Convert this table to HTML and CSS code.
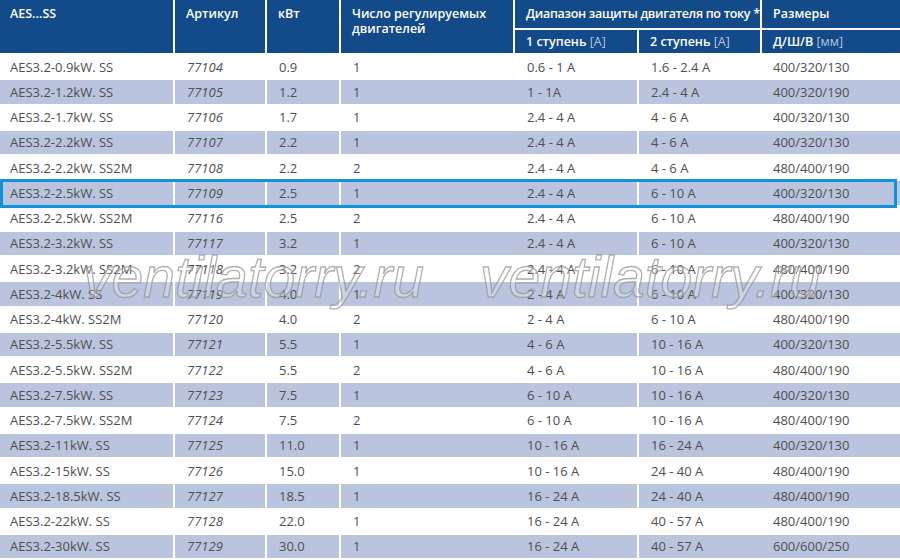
FILE: index.html
```html
<!DOCTYPE html>
<html lang="ru">
<head>
<meta charset="utf-8">
<title>AES...SS</title>
<link rel="stylesheet" href="styles.css">
</head>
<body>
<div class="sheet">
  <div class="head">
    <div class="hc c1 span2">AES...SS</div>
    <div class="hc c2 span2">Артикул</div>
    <div class="hc c3 span2">кВт</div>
    <div class="hc c4 span2">Число регулируемых<br>двигателей</div>
    <div class="hc c56">Диапазон защиты двигателя по току *</div>
    <div class="hc c7 last">Размеры</div>
    <div class="hc sub c5">1 ступень <span class="unit">[A]</span></div>
    <div class="hc sub c6">2 ступень <span class="unit">[A]</span></div>
    <div class="hc sub c7 last">Д/Ш/В <span class="unit">[мм]</span></div>
  </div>
  <div class="body">
    <div class="row"><div class="d sep">AES3.2-0.9kW. SS</div><div class="d sep art">77104</div><div class="d sep">0.9</div><div class="d">1</div><div class="d sep">0.6 - 1 A</div><div class="d">1.6 - 2.4 A</div><div class="d">400/320/130</div></div>
    <div class="row"><div class="d sep">AES3.2-1.2kW. SS</div><div class="d sep art">77105</div><div class="d sep">1.2</div><div class="d">1</div><div class="d sep">1 - 1A</div><div class="d">2.4 - 4 A</div><div class="d">400/320/190</div></div>
    <div class="row"><div class="d sep">AES3.2-1.7kW. SS</div><div class="d sep art">77106</div><div class="d sep">1.7</div><div class="d">1</div><div class="d sep">2.4 - 4 A</div><div class="d">4 - 6 A</div><div class="d">400/320/130</div></div>
    <div class="row"><div class="d sep">AES3.2-2.2kW. SS</div><div class="d sep art">77107</div><div class="d sep">2.2</div><div class="d">1</div><div class="d sep">2.4 - 4 A</div><div class="d">4 - 6 A</div><div class="d">400/320/130</div></div>
    <div class="row"><div class="d sep">AES3.2-2.2kW. SS2M</div><div class="d sep art">77108</div><div class="d sep">2.2</div><div class="d">2</div><div class="d sep">2.4 - 4 A</div><div class="d">4 - 6 A</div><div class="d">480/400/190</div></div>
    <div class="row current"><div class="d sep">AES3.2-2.5kW. SS</div><div class="d sep art">77109</div><div class="d sep">2.5</div><div class="d">1</div><div class="d sep">2.4 - 4 A</div><div class="d">6 - 10 A</div><div class="d">400/320/130</div></div>
    <div class="row"><div class="d sep">AES3.2-2.5kW. SS2M</div><div class="d sep art">77116</div><div class="d sep">2.5</div><div class="d">2</div><div class="d sep">2.4 - 4 A</div><div class="d">6 - 10 A</div><div class="d">480/400/190</div></div>
    <div class="row"><div class="d sep">AES3.2-3.2kW. SS</div><div class="d sep art">77117</div><div class="d sep">3.2</div><div class="d">1</div><div class="d sep">2.4 - 4 A</div><div class="d">6 - 10 A</div><div class="d">400/320/130</div></div>
    <div class="row"><div class="d sep">AES3.2-3.2kW. SS2M</div><div class="d sep art">77118</div><div class="d sep">3.2</div><div class="d">2</div><div class="d sep">2.4 - 4 A</div><div class="d">6 - 10 A</div><div class="d">480/400/190</div></div>
    <div class="row"><div class="d sep">AES3.2-4kW. SS</div><div class="d sep art">77119</div><div class="d sep">4.0</div><div class="d">1</div><div class="d sep">2 - 4 A</div><div class="d">6 - 10 A</div><div class="d">400/320/130</div></div>
    <div class="row"><div class="d sep">AES3.2-4kW. SS2M</div><div class="d sep art">77120</div><div class="d sep">4.0</div><div class="d">2</div><div class="d sep">2 - 4 A</div><div class="d">6 - 10 A</div><div class="d">480/400/190</div></div>
    <div class="row"><div class="d sep">AES3.2-5.5kW. SS</div><div class="d sep art">77121</div><div class="d sep">5.5</div><div class="d">1</div><div class="d sep">4 - 6 A</div><div class="d">10 - 16 A</div><div class="d">400/320/130</div></div>
    <div class="row"><div class="d sep">AES3.2-5.5kW. SS2M</div><div class="d sep art">77122</div><div class="d sep">5.5</div><div class="d">2</div><div class="d sep">4 - 6 A</div><div class="d">10 - 16 A</div><div class="d">480/400/190</div></div>
    <div class="row"><div class="d sep">AES3.2-7.5kW. SS</div><div class="d sep art">77123</div><div class="d sep">7.5</div><div class="d">1</div><div class="d sep">6 - 10 A</div><div class="d">10 - 16 A</div><div class="d">400/320/130</div></div>
    <div class="row"><div class="d sep">AES3.2-7.5kW. SS2M</div><div class="d sep art">77124</div><div class="d sep">7.5</div><div class="d">2</div><div class="d sep">6 - 10 A</div><div class="d">10 - 16 A</div><div class="d">480/400/190</div></div>
    <div class="row"><div class="d sep">AES3.2-11kW. SS</div><div class="d sep art">77125</div><div class="d sep">11.0</div><div class="d">1</div><div class="d sep">10 - 16 A</div><div class="d">16 - 24 A</div><div class="d">400/320/130</div></div>
    <div class="row"><div class="d sep">AES3.2-15kW. SS</div><div class="d sep art">77126</div><div class="d sep">15.0</div><div class="d">1</div><div class="d sep">10 - 16 A</div><div class="d">24 - 40 A</div><div class="d">480/400/190</div></div>
    <div class="row"><div class="d sep">AES3.2-18.5kW. SS</div><div class="d sep art">77127</div><div class="d sep">18.5</div><div class="d">1</div><div class="d sep">16 - 24 A</div><div class="d">24 - 40 A</div><div class="d">480/400/190</div></div>
    <div class="row"><div class="d sep">AES3.2-22kW. SS</div><div class="d sep art">77128</div><div class="d sep">22.0</div><div class="d">1</div><div class="d sep">16 - 24 A</div><div class="d">40 - 57 A</div><div class="d">480/400/190</div></div>
    <div class="row"><div class="d sep">AES3.2-30kW. SS</div><div class="d sep art">77129</div><div class="d sep">30.0</div><div class="d">1</div><div class="d sep">16 - 24 A</div><div class="d">40 - 57 A</div><div class="d">600/600/250</div></div>
  </div>
  <div class="wm wm1">ventilatorry.ru</div>
  <div class="wm wm2">ventilatorry.ru</div>
</div>
</body>
</html>
```

FILE: styles.css
```css
html, body {
  margin: 0;
  padding: 0;
  background: #ffffff;
}
.sheet {
  position: relative;
  width: 900px;
  height: 560px;
  overflow: hidden;
  font-family: "Open Sans", "Liberation Sans", sans-serif;
}
.head {
  display: grid;
  grid-template-columns: 175px 92px 74px 174px 124px 123px 138px;
  grid-template-rows: 30px 25px;
}
.hc {
  box-sizing: border-box;
  background: #124a8a;
  color: #ffffff;
  font-size: 12.5px;
  font-weight: 600;
  line-height: 15px;
  border-right: 2px solid #ffffff;
  border-bottom: 2px solid #ffffff;
  padding: 6px 0 0 11px;
  white-space: nowrap;
}
.hc.last { border-right: none; }
.span2 { grid-row: span 2; }
.c1 { padding-left: 10px; }
.c56 {
  grid-column: span 2;
  letter-spacing: -0.3px;
}
.hc.sub { padding-top: 4px; }
.unit {
  font-weight: 400;
  color: #b7c6de;
}
.row {
  display: grid;
  grid-template-columns: 175px 92px 74px 174px 124px 123px 138px;
  height: 25.25px;
}
.d {
  box-sizing: border-box;
  border-bottom: 2px solid #ffffff;
  padding-left: 12px;
  font-size: 13px;
  color: #4f4f4f;
  display: flex;
  align-items: center;
  white-space: nowrap;
}
.d:first-child { padding-left: 10px; }
.d:last-child { padding-left: 11px; }
.d.sep { border-right: 2px solid #ffffff; }
.art { font-style: italic; }
.row:nth-child(even) .d { background: #bac4de; }
.row.current { position: relative; }
.row.current::after {
  content: "";
  position: absolute;
  left: 0;
  right: 3px;
  top: -2px;
  bottom: -1px;
  border: 3px solid #1092dc;
  pointer-events: none;
}
.wm {
  position: absolute;
  top: 244px;
  font-family: "Liberation Sans", "DejaVu Sans", sans-serif;
  font-style: italic;
  font-size: 57px;
  line-height: 66px;
  color: rgba(255, 255, 255, 0.25);
  -webkit-text-stroke: 1.3px rgba(150, 150, 150, 0.75);
  pointer-events: none;
  white-space: nowrap;
}
.wm1 { left: 83px; }
.wm2 { left: 480px; }
```
